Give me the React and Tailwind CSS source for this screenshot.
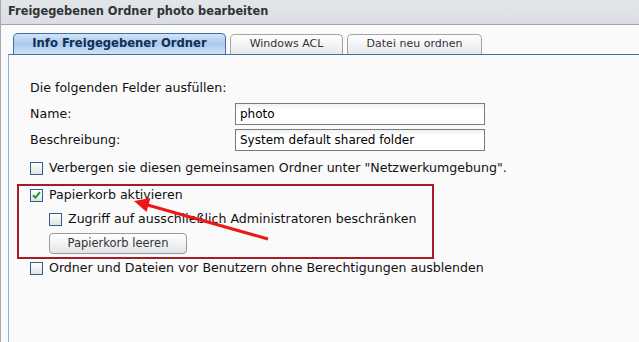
import React from 'react';

const Checkbox = ({ checked }) => (
    <span className="w-[13px] h-[13px] shrink-0 border border-[#2f5f8f] bg-gradient-to-b from-white to-[#dfe3e8] flex items-center justify-center">
        {checked && (
            <svg width="9" height="8" viewBox="0 0 9 8">
                <path d="M1 4.2 L3.4 6.6 L8 1.2" fill="none" stroke="#1f9a2a" strokeWidth="2" />
            </svg>
        )}
    </span>
);

const CheckRow = ({ checked, label, className = '' }) => (
    <label className={`flex items-center gap-[6px] ${className}`}>
        <Checkbox checked={checked} />
        <span>{label}</span>
    </label>
);

const FieldRow = ({ label, value }) => (
    <div className="flex items-center h-[26px]">
        <span className="w-[205px]">{label}</span>
        <input
            readOnly
            value={value}
            className="w-[250px] h-[22px] border border-[#7a7a7a] bg-gradient-to-b from-[#eef0f2] to-white to-[30%] px-[4px] text-[12px] text-black outline-none"
        />
    </div>
);

export default function App() {
    return (
        <div className="relative w-[639px] h-[342px] overflow-hidden bg-[#fafafa] border-l border-[#a9a9a9] text-[12.6px] text-[#111] font-['DejaVu_Sans',sans-serif]">
            {/* title bar */}
            <div className="h-[25px] bg-gradient-to-b from-[#e3e6e9] to-[#dadee2] border-b border-[#a5a5a5] flex items-center pl-[7px]">
                <span className="font-bold text-[11.4px] text-[#333]">Freigegebenen Ordner photo bearbeiten</span>
            </div>

            {/* tabs */}
            <div className="flex items-end gap-[4px] pl-[12px] h-[29px]">
                <div className="w-[213px] h-[21px] rounded-t-[5px] border border-b-0 border-[#3f72a3] bg-gradient-to-b from-[#d3e4f5] via-[#a9cbed] to-[#cfe2f5] flex items-center justify-center font-bold text-[11.6px] text-[#0f2f57]">
                    Info Freigegebener Ordner
                </div>
                <div className="w-[113px] h-[20px] rounded-t-[5px] border border-b-0 border-[#a3a3a3] bg-gradient-to-b from-white to-[#e6e9ec] flex items-center justify-center text-[11px] text-[#333]">
                    Windows ACL
                </div>
                <div className="w-[135px] h-[20px] rounded-t-[5px] border border-b-0 border-[#a3a3a3] bg-gradient-to-b from-white to-[#e6e9ec] flex items-center justify-center text-[11px] text-[#333]">
                    Datei neu ordnen
                </div>
            </div>

            {/* panel */}
            <div className="ml-[7px] h-full border-l border-t border-l-[#8fb5da] border-t-[#3d6f9f] pl-[21px] pt-[20px]">
                <div className="h-[26px] flex items-center">Die folgenden Felder ausfüllen:</div>
                <FieldRow label="Name:" value="photo" />
                <FieldRow label="Beschreibung:" value="System default shared folder" />
                <CheckRow className="mt-[2px] h-[27px]" label={'Verbergen sie diesen gemeinsamen Ordner unter "Netzwerkumgebung".'} />

                <div className="mt-[2px] -ml-[13px] w-[417px] border-2 border-[#a21d27] pl-[11px] pb-[3px]">
                    <CheckRow checked className="h-[18px]" label="Papierkorb aktivieren" />
                    <div className="pl-[19px]">
                        <CheckRow className="h-[29px] pt-[1px]" label="Zugriff auf ausschließlich Administratoren beschränken" />
                        <button className="w-[138px] h-[21px] rounded-[4px] border border-[#9a9a9a] bg-gradient-to-b from-white to-[#e2e5e8] text-[#333] text-[11.5px]">
                            Papierkorb leeren
                        </button>
                    </div>
                </div>

                <CheckRow className="h-[19px]" label="Ordner und Dateien vor Benutzern ohne Berechtigungen ausblenden" />
            </div>

            {/* annotation arrow */}
            <svg className="absolute left-0 top-0 pointer-events-none" width="639" height="342">
                <line x1="267" y1="239" x2="143" y2="204" stroke="#f01616" strokeWidth="3" />
                <polygon points="133,201 149.5,198 145.5,212" fill="#f01616" />
            </svg>
        </div>
    );
}
